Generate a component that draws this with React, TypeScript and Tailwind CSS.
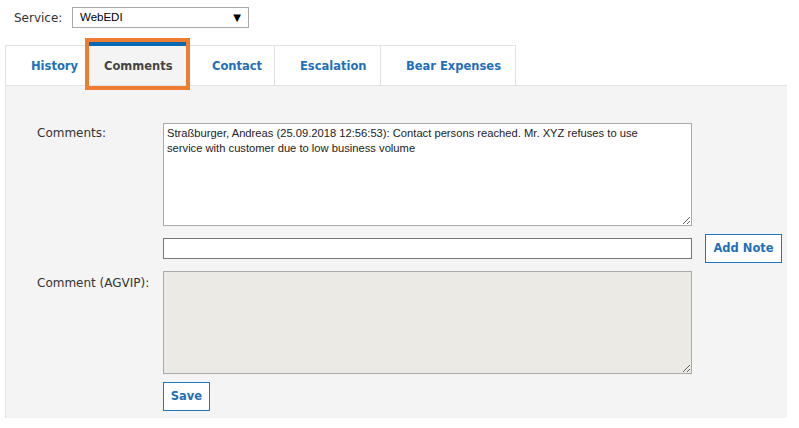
import { useState } from 'react';

const tabs = [
  { id: 'history', label: 'History', w: 'w-[83px]', pl: 'pl-[25px]' },
  { id: 'comments', label: 'Comments', w: 'w-[98px]', pl: 'pl-[15px]' },
  { id: 'contact', label: 'Contact', w: 'w-[88px]', pl: 'pl-[25px]' },
  { id: 'escalation', label: 'Escalation', w: 'w-[106px]', pl: 'pl-[25px]' },
  { id: 'bear', label: 'Bear Expenses', w: 'w-[136px]', pl: 'pl-[25px]' },
];

const verdana = "font-['DejaVu_Sans',Verdana,sans-serif]";
const arial = "font-['Liberation_Sans',Arial,sans-serif]";

export default function App() {
  const [active, setActive] = useState('comments');
  const [note, setNote] = useState('');

  return (
    <div className={`relative w-[799px] h-[428px] bg-white ${verdana} text-[#333]`}>
      {/* service picker */}
      <div className="flex items-center h-[34px] pl-[14px] pt-[1px]">
        <span className="text-[12px] w-[58px]">Service:</span>
        <div className="flex items-center justify-between w-[177px] h-[21px] border border-[#a9a9a9] bg-white pl-[7px] pr-[7px]">
          <span className={`${arial} text-[11.5px] text-black`}>WebEDI</span>
          <span className="text-[10px] text-black leading-none">▼</span>
        </div>
      </div>

      {/* tabs */}
      <div className="flex items-end h-[51px] pl-[5px]">
        {tabs.map((t, i) => {
          const on = t.id === active;
          return (
            <button
              key={t.id}
              type="button"
              onClick={() => setActive(t.id)}
              className={[
                'flex items-center text-left text-[11.5px] font-bold border-l border-[#e2e2e2]',
                t.w,
                t.pl,
                i === tabs.length - 1 ? 'border-r' : '',
                on
                  ? 'h-[44px] bg-[#f4f4f4] text-[#444] border-t-[5px] border-t-[#0b69b3] pt-[3px]'
                  : 'h-[40px] bg-white text-[#1f6fba] border-t pt-[3px]',
              ].join(' ')}
            >
              {t.label}
            </button>
          );
        })}
      </div>

      {/* panel */}
      <div className="w-[782px] ml-[5px] h-[333px] bg-[#f4f4f4] border-l border-t border-[#e2e2e2] pt-[37px] pl-[31px]">
        <div className="grid grid-cols-[126px_auto]">
          <label className="text-[12px] pt-[1px]">Comments:</label>
          <textarea
            readOnly
            defaultValue="Straßburger, Andreas (25.09.2018 12:56:53): Contact persons reached. Mr. XYZ refuses to use service with customer due to low business volume"
            className={`${arial} w-[529px] h-[103px] border border-[#a9a9a9] bg-white text-[11.2px] leading-[15px] text-[#222] pl-[3px] pr-[40px] pt-[2px] outline-none`}
          />

          <div />
          <div className="flex items-center mt-[8px] h-[29px]">
            <input
              value={note}
              onChange={(e) => setNote(e.target.value)}
              className={`${arial} w-[529px] h-[21px] border border-[#767676] bg-white text-[11px] px-[3px] outline-none`}
            />
            <button
              type="button"
              className="ml-[13px] w-[77px] h-[29px] border-[1.5px] border-[#1f77c2] bg-white text-[11.5px] font-bold text-[#1f6fba]"
            >
              Add Note
            </button>
          </div>

          <label className="text-[12px] mt-[8px] pt-[3px]">Comment (AGVIP):</label>
          <textarea
            disabled
            className="mt-[8px] w-[529px] h-[103px] border border-[#a9a9a9] bg-[#ebeae4] outline-none"
          />

          <div />
          <div className="mt-[8px]">
            <button
              type="button"
              className="w-[47px] h-[29px] border-[1.5px] border-[#1f77c2] bg-white text-[11.5px] font-bold text-[#1f6fba]"
            >
              Save
            </button>
          </div>
        </div>
      </div>

      {/* highlight around active tab */}
      <div className="absolute left-[85px] top-[38px] w-[105px] h-[52px] border-[4px] border-[#ed7d31] pointer-events-none" />
    </div>
  );
}
